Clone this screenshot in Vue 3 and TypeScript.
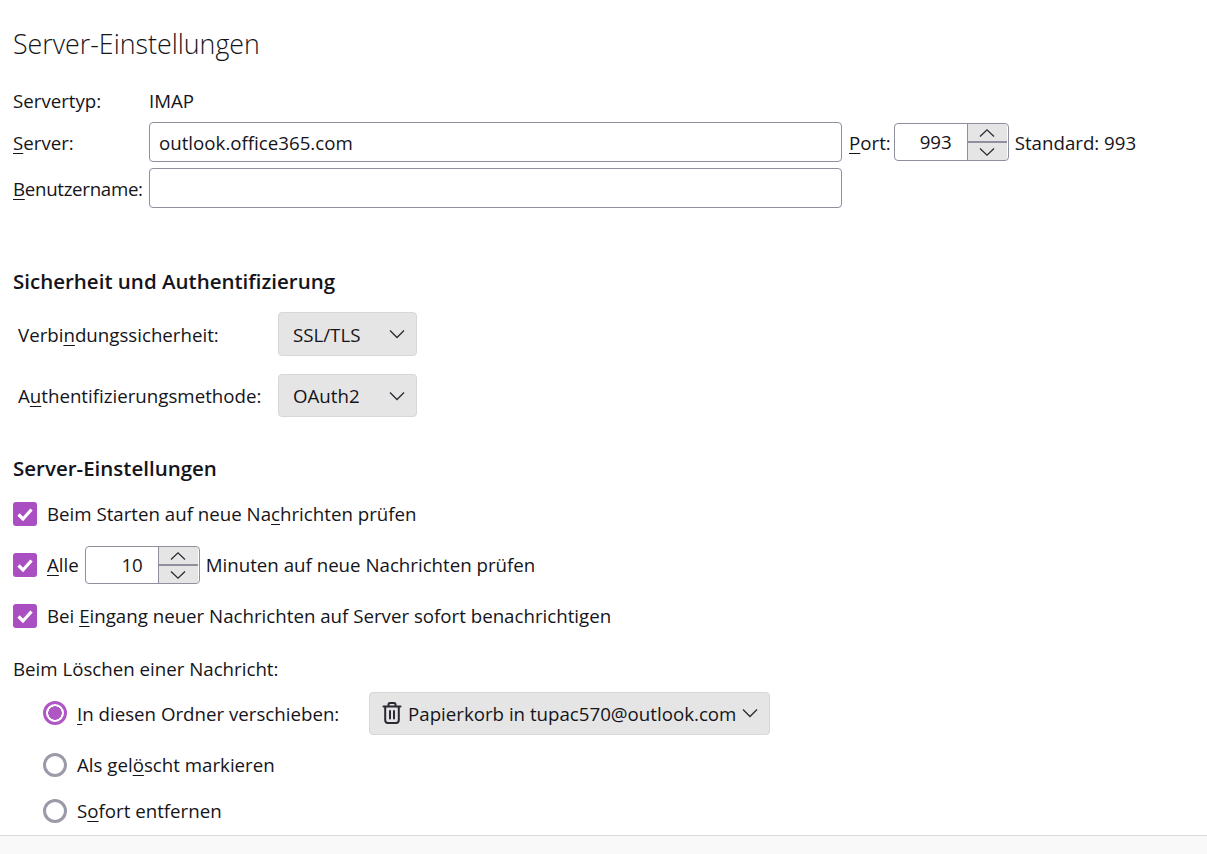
<script setup lang="ts">
const ticks: { pre: string; key: string; post: string }[] = [
  { pre: 'Beim Starten auf neue Na', key: 'c', post: 'hrichten prüfen' },
  { pre: 'Bei ', key: 'E', post: 'ingang neuer Nachrichten auf Server sofort benachrichtigen' }
]
</script>

<template>
  <div class="page">
    <main class="content">
      <h1 class="title">Server-Einstellungen</h1>

      <div class="server-grid">
        <span class="lbl up">Servertyp:</span>
        <span class="val up">IMAP</span>
        <span class="lbl down"><u>S</u>erver:</span>
        <div class="server-line">
          <div class="input wide">outlook.office365.com</div>
          <span class="port-lbl down"><u>P</u>ort:</span>
          <div class="spin port">
            <span class="spin-val">993</span>
            <span class="spin-btns">
              <span class="spin-btn"><svg width="18" height="10" viewBox="0 0 18 10"><path d="M2 8.500 9 1.800 16 8.500" /></svg></span>
              <span class="spin-btn"><svg width="18" height="10" viewBox="0 0 18 10"><path d="M2 1.500 9 8.200 16 1.500" /></svg></span>
            </span>
          </div>
          <span class="std down">Standard: 993</span>
        </div>
        <span class="lbl down tight"><u>B</u>enutzername:</span>
        <div class="input wide"></div>
      </div>

      <h2 class="head sec1">Sicherheit und Authentifizierung</h2>

      <div class="sec-grid">
        <span class="lbl down">Verbi<u>n</u>dungssicherheit:</span>
        <div class="select s1">
          <span class="down">SSL/TLS</span>
          <svg class="chev" width="16" height="10" viewBox="0 0 16 10"><path d="M1 1.500 8 8.500 15 1.500" /></svg>
        </div>
        <span class="lbl">A<u>u</u>thentifizierungsmethode:</span>
        <div class="select s2">
          <span>OAuth2</span>
          <svg class="chev" width="16" height="10" viewBox="0 0 16 10"><path d="M1 1.500 8 8.500 15 1.500" /></svg>
        </div>
      </div>

      <h2 class="head sec2">Server-Einstellungen</h2>

      <div class="check-row first">
        <span class="check"><svg width="24" height="24" viewBox="0 0 24 24"><path d="M5.500 12.500 10 17 18.500 7.500" /></svg></span>
        <span>{{ ticks[0].pre }}<u>{{ ticks[0].key }}</u>{{ ticks[0].post }}</span>
      </div>
      <div class="check-row second">
        <span class="check"><svg width="24" height="24" viewBox="0 0 24 24"><path d="M5.500 12.500 10 17 18.500 7.500" /></svg></span>
        <span class="alle"><u>A</u>lle</span>
        <div class="spin mins">
          <span class="spin-val">10</span>
          <span class="spin-btns">
            <span class="spin-btn"><svg width="18" height="10" viewBox="0 0 18 10"><path d="M2 8.500 9 1.800 16 8.500" /></svg></span>
            <span class="spin-btn"><svg width="18" height="10" viewBox="0 0 18 10"><path d="M2 1.500 9 8.200 16 1.500" /></svg></span>
          </span>
        </div>
        <span>Minuten auf neue Nachrichten prüfen</span>
      </div>
      <div class="check-row third">
        <span class="check"><svg width="24" height="24" viewBox="0 0 24 24"><path d="M5.500 12.500 10 17 18.500 7.500" /></svg></span>
        <span>{{ ticks[1].pre }}<u>{{ ticks[1].key }}</u>{{ ticks[1].post }}</span>
      </div>

      <div class="del-label">Beim Löschen einer Nachricht:</div>

      <div class="radio-row r1">
        <span class="radio on"></span>
        <span class="r1-text down"><u>I</u>n diesen Ordner verschieben:</span>
        <div class="select folder">
          <svg class="trash" width="20" height="22" viewBox="0 0 20 22">
            <path d="M6.500 3.500V2.500C6.500 1.700 7.200 1 8 1H12C12.800 1 13.500 1.700 13.500 2.500V3.500" />
            <path d="M1.500 4.500H18.500" />
            <path d="M3.200 5V18C3.200 19.800 4.300 20.900 6 20.900H14C15.700 20.900 16.800 19.800 16.800 18V5" />
            <path d="M8 9V16.500M12 9V16.500" />
          </svg>
          <span class="folder-text down">Papierkorb in tupac570@outlook.com</span>
          <svg class="chev-f" width="16" height="10" viewBox="0 0 16 10"><path d="M1 1.500 8 8.500 15 1.500" /></svg>
        </div>
      </div>
      <div class="radio-row r2">
        <span class="radio"></span>
        <span>Als gel<u>ö</u>scht markieren</span>
      </div>
      <div class="radio-row r3">
        <span class="radio"></span>
        <span>S<u>o</u>fort entfernen</span>
      </div>
    </main>
    <footer class="footer"></footer>
  </div>
</template>

<style>
html, body { margin: 0; background: #fff; }
</style>

<style scoped>
.page {
  width: 1207px;
  height: 854px;
  display: flex;
  flex-direction: column;
  overflow: hidden;
  background: #fff;
  color: #15141a;
  font-family: "Open Sans", "Noto Sans", sans-serif;
  font-size: 18.700px;
  line-height: 24px;
}
.content { flex: 1; padding: 0 0 0 13px; min-height: 0; overflow: hidden; }
.footer { height: 18px; border-top: 1px solid #d7d7db; background: #f9f9fa; }
u { text-underline-offset: 3px; text-decoration-thickness: 1px; }
.up { padding-bottom: 2px; }
.down { padding-top: 2px; }
.tight { letter-spacing: -0.3px; }

.title {
  margin: 26px 0 0;
  font-size: 26.800px;
  line-height: 36px;
  font-weight: 300;
  color: #15141a;
}
.server-grid {
  margin-top: 25px;
  display: grid;
  grid-template-columns: 136px 1fr;
  grid-template-rows: 29px 42px 40px;
  row-gap: 5px;
  align-items: center;
}
.server-line { display: flex; align-items: center; }
.input {
  box-sizing: border-box;
  height: 40px;
  border: 1px solid #8f8f9d;
  border-radius: 4px;
  padding: 1px 9px 0;
  line-height: 38px;
  background: #fff;
}
.wide { width: 693px; }
.port-lbl { margin-left: 7px; }
.spin {
  box-sizing: border-box;
  display: flex;
  flex: none;
  border: 1px solid #8f8f9d;
  border-radius: 4px;
  overflow: hidden;
  background: #fff;
}
.port { width: 115px; height: 38px; margin-left: 3px; }
.mins { width: 115px; height: 38px; margin-left: 6px; margin-right: 6px; }
.spin-val { flex: 1; text-align: right; line-height: 36px; padding-right: 15px; }
.spin-btns {
  width: 39px;
  margin-right: 1px;
  display: flex;
  flex-direction: column;
  gap: 2px;
  background: #8f8f9d;
  border-left: 1px solid #8f8f9d;
}
.spin-btn { flex: 1; display: flex; align-items: center; justify-content: center; background: #e5e5e5; }
.spin-btn svg path { fill: none; stroke: #2b2a33; stroke-width: 1.300; }
.std { margin-left: 6px; }

.head { margin: 0; font-size: 20.500px; line-height: 26px; font-weight: 600; }
.sec1 { margin-top: 60px; }
.sec2 { margin-top: 38px; }
.sec-grid {
  margin-top: 18px;
  padding-left: 5px;
  display: grid;
  grid-template-columns: 260px auto;
  justify-content: start;
  row-gap: 18px;
  align-items: center;
}
.select {
  box-sizing: border-box;
  display: flex;
  align-items: center;
  background: #e5e5e5;
  border: 1px solid #d7d7db;
  border-radius: 4px;
}
.s1, .s2 { width: 139px; padding-left: 14px; }
.s1 { height: 44px; }
.s2 { height: 43px; }
.chev { margin-left: auto; margin-right: 11px; }
.chev path, .chev-f path { fill: none; stroke: #2b2a33; stroke-width: 1.300; }

.check-row { display: flex; align-items: center; }
.first { margin-top: 21px; height: 24px; }
.second { margin-top: 20px; height: 38px; }
.third { margin-top: 20px; height: 24px; }
.check {
  width: 24px;
  height: 24px;
  flex: none;
  border-radius: 3px;
  background: #a94fc1;
  margin-right: 10px;
}
.check svg { display: block; }
.check path { fill: none; stroke: #fff; stroke-width: 3.200; }
.del-label { margin-top: 29px; height: 24px; }

.radio-row { display: flex; align-items: center; padding-left: 30px; }
.r1 { margin-top: 10px; height: 44px; }
.r2 { margin-top: 18px; height: 24px; }
.r3 { margin-top: 22px; height: 24px; }
.radio {
  box-sizing: border-box;
  flex: none;
  width: 24px;
  height: 24px;
  border-radius: 50%;
  border: 3px solid #9b9aa8;
  background: #fff;
  margin-right: 10px;
}
.radio.on {
  border-color: #b057c6;
  background: radial-gradient(circle, #b057c6 0 6.500px, #fff 7px);
}
.r1-text { width: 292px; flex: none; }
.folder { width: 401px; height: 43px; padding-left: 12px; }
.trash { flex: none; margin-right: 6px; }
.trash path { fill: none; stroke: #2b2a33; stroke-width: 2; stroke-linecap: round; }
.folder-text { white-space: nowrap; }
.chev-f { margin-left: 6px; flex: none; }
</style>
